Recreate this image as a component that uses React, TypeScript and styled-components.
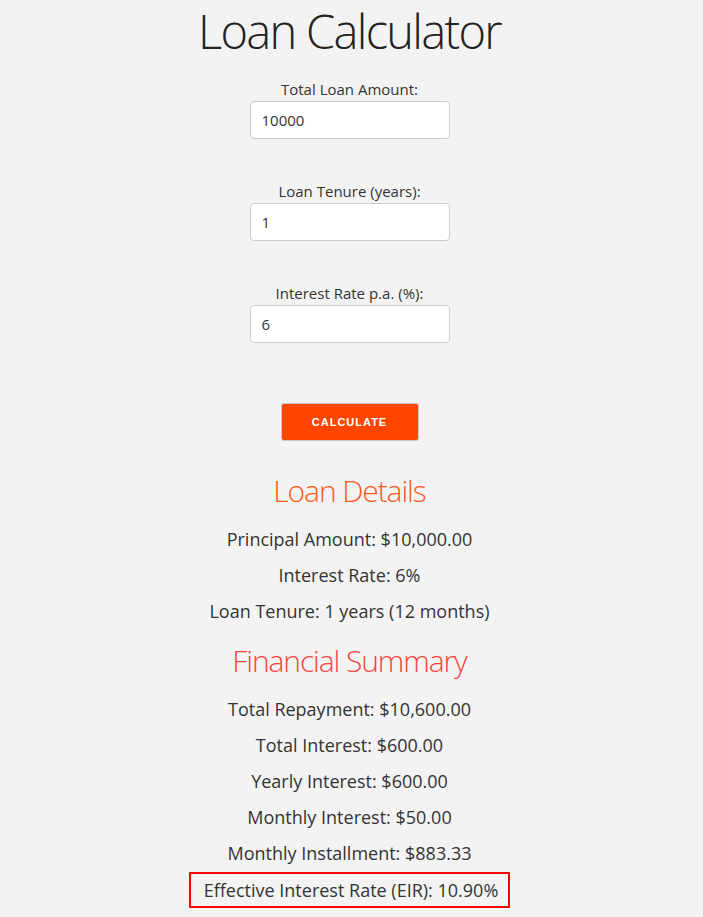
import styled, { createGlobalStyle } from 'styled-components';

const GlobalStyle = createGlobalStyle`
  body {
    margin: 0;
    background: #f3f3f3;
    font-family: 'Open Sans', 'Liberation Sans', sans-serif;
    color: #333;
  }
`;

const Page = styled.div`
  display: flex;
  flex-direction: column;
  align-items: center;
  padding-right: 4px;
  text-align: center;
`;

const Title = styled.h1`
  margin: 0;
  font-size: 47px;
  font-weight: 300;
  line-height: 62px;
  letter-spacing: -1.7px;
  color: #222;
`;

const Form = styled.form`
  display: flex;
  flex-direction: column;
  align-items: center;
  gap: 42px;
  margin-top: 17px;
`;

const Field = styled.div`
  display: flex;
  flex-direction: column;
  align-items: center;
  gap: 2px;
`;

const Label = styled.label`
  font-size: 15px;
  line-height: 20px;
  color: #333;
`;

const Input = styled.input`
  box-sizing: border-box;
  width: 200px;
  height: 38px;
  padding: 0 11px;
  border: 1px solid #ccc;
  border-radius: 4px;
  background: #fff;
  font-family: 'Open Sans', 'Liberation Sans', sans-serif;
  font-size: 15px;
  color: #333;
  outline: none;
`;

const Button = styled.button`
  margin-top: 18px;
  width: 138px;
  height: 38px;
  border: 1px solid #c8c8c8;
  border-radius: 3px;
  background: #ff4500;
  color: #fff;
  font-family: 'Liberation Sans', Arial, sans-serif;
  font-size: 11px;
  font-weight: 700;
  letter-spacing: 1px;
  cursor: pointer;
`;

const Results = styled.div`
  display: flex;
  flex-direction: column;
  align-items: center;
  margin-top: 30px;
`;

const Heading = styled.h2<{ $tone: string }>`
  margin: 0 0 10px;
  font-size: 30px;
  font-weight: 300;
  line-height: 40px;
  letter-spacing: -1.1px;
  color: ${(p) => p.$tone};
`;

const Line = styled.p`
  margin: 0;
  font-size: 18px;
  line-height: 36px;
  color: #333;
`;

const Highlight = styled(Line)`
  margin-top: 1px;
  padding: 0 10px 0 13px;
  border: 2px solid #f00;
  line-height: 32px;
`;

const Gap = styled.div`
  height: 12px;
`;

export default function App() {
  return (
    <>
      <GlobalStyle />
      <Page>
        <Title>Loan Calculator</Title>
        <Form onSubmit={(e) => e.preventDefault()}>
          <Field>
            <Label>Total Loan Amount:</Label>
            <Input defaultValue="10000" />
          </Field>
          <Field>
            <Label>Loan Tenure (years):</Label>
            <Input defaultValue="1" />
          </Field>
          <Field>
            <Label>Interest Rate p.a. (%):</Label>
            <Input defaultValue="6" />
          </Field>
          <Button type="submit">CALCULATE</Button>
        </Form>
        <Results>
          <Heading $tone="#ff5a1c">Loan Details</Heading>
          <Line>Principal Amount: $10,000.00</Line>
          <Line>Interest Rate: 6%</Line>
          <Line>Loan Tenure: 1 years (12 months)</Line>
          <Gap />
          <Heading $tone="#fa4640">Financial Summary</Heading>
          <Line>Total Repayment: $10,600.00</Line>
          <Line>Total Interest: $600.00</Line>
          <Line>Yearly Interest: $600.00</Line>
          <Line>Monthly Interest: $50.00</Line>
          <Line>Monthly Installment: $883.33</Line>
          <Highlight>Effective Interest Rate (EIR): 10.90%</Highlight>
        </Results>
      </Page>
    </>
  );
}
